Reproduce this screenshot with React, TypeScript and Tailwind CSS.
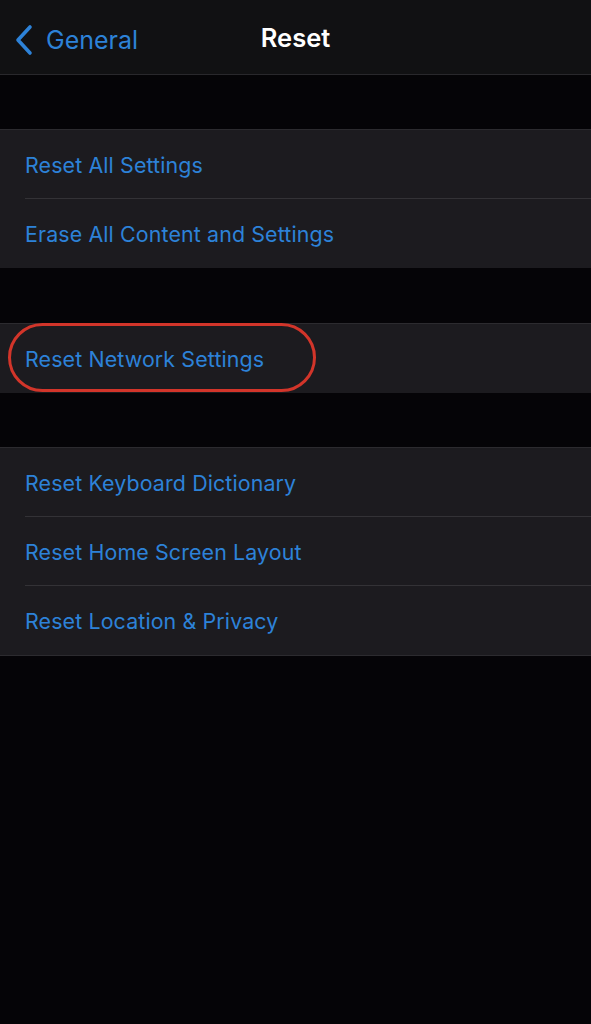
import React from "react";

const font = { fontFamily: "Inter, 'Noto Sans', sans-serif" };

function Row({ label, last }: { label: string; last?: boolean }) {
  return (
    <div className="relative h-[69px] flex items-center pl-[25px]">
      <span className="text-[21.4px] tracking-[0.12px] text-[#2d82d8] mt-[1px]">{label}</span>
      {!last && <div className="absolute bottom-0 left-[25px] right-0 h-px bg-[#333236]"></div>}
    </div>
  );
}

function Group({ children }: { children: React.ReactNode }) {
  return <div className="bg-[#1c1b1f] border-t border-[#2c2b2f]">{children}</div>;
}

export default function App() {
  return (
    <div className="w-[591px] h-[1024px] bg-[#050407] overflow-hidden" style={font}>
      {/* Nav bar */}
      <div className="relative h-[75px] bg-[#111113] border-b border-[#29282c] flex items-center justify-center">
        <div className="absolute left-[13px] top-[24px] flex items-center gap-[12px] text-[#2d82d8]">
          <svg width="21" height="32" viewBox="0 0 21 32" fill="none">
            <path d="M17 3 L5 16 L17 29" stroke="currentColor" strokeWidth="3.6" strokeLinecap="round" strokeLinejoin="round" />
          </svg>
          <span className="text-[25px] leading-none">General</span>
        </div>
        <span className="text-[25.5px] font-semibold text-white mt-[3px]">Reset</span>
      </div>

      <div className="h-[54px]"></div>
      <Group>
        <Row label="Reset All Settings" />
        <Row label="Erase All Content and Settings" last />
      </Group>

      <div className="h-[55px]"></div>
      <div className="relative">
        <Group>
          <Row label="Reset Network Settings" last />
        </Group>
        {/* annotation */}
        <div className="absolute left-[8px] top-[0px] w-[308px] h-[69px] rounded-full border-[3px] border-[#d2352a]"></div>
      </div>

      <div className="h-[54px]"></div>
      <Group>
        <Row label="Reset Keyboard Dictionary" />
        <Row label="Reset Home Screen Layout" />
        <Row label="Reset Location & Privacy" last />
      </Group>
      <div className="h-px bg-[#2c2b2f]"></div>
    </div>
  );
}
